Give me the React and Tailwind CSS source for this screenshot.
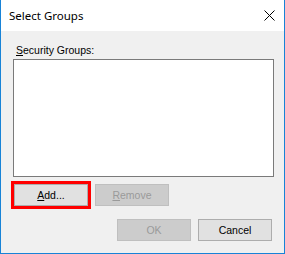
import React from "react";

const bodyFont = { fontFamily: '"Liberation Sans", Arial, sans-serif' };

const Button = ({ children, disabled }) => (
  <button
    className={
      disabled
        ? "w-[74px] h-[22px] border border-[#bfbfbf] bg-[#cccccc] text-[#9a9a9a] text-[10.5px] leading-[20px]"
        : "w-[74px] h-[22px] border border-[#adadad] bg-[#e1e1e1] text-black text-[10.5px] leading-[20px]"
    }
  >
    {children}
  </button>
);

const App = () => {
  return (
    <div
      className="w-[285px] h-[254px] flex flex-col border-x border-b border-[#1883d7] bg-[#f0f0f0]"
      style={bodyFont}
    >
      <div className="h-[31px] shrink-0 bg-white flex items-center justify-between pl-[8px] pr-[9px]">
        <span className="text-[11.5px] text-black font-['Noto_Sans',sans-serif]">Select Groups</span>
        <svg width="11" height="11" viewBox="0 0 11 11" className="mt-[-1px]">
          <path d="M0.5 0.5 L10.5 10.5 M10.5 0.5 L0.5 10.5" stroke="#000" strokeWidth="1" />
        </svg>
      </div>

      <div className="flex-1 flex flex-col pl-[10px] pr-[12px] pt-[10px]">
        <div className="h-[16px] leading-[18px] pl-[5px] text-[10.5px] text-black">
          <u className="underline-offset-1">S</u>ecurity Groups:
        </div>
        <div className="ml-[2px] mt-[2px] w-[261px] h-[118px] border border-[#7a7a7a] bg-white"></div>

        <div className="flex items-center mt-[4px] gap-[4px]">
          <div className="border-[3px] border-[#ff0000] flex">
            <Button>
              <u className="underline-offset-1">A</u>dd...
            </Button>
          </div>
          <Button disabled>
            <u className="underline-offset-1">R</u>emove
          </Button>
        </div>

        <div className="flex justify-end gap-[7px] mt-[10px]">
          <Button disabled>OK</Button>
          <Button>Cancel</Button>
        </div>
      </div>
    </div>
  );
};

export default App;
